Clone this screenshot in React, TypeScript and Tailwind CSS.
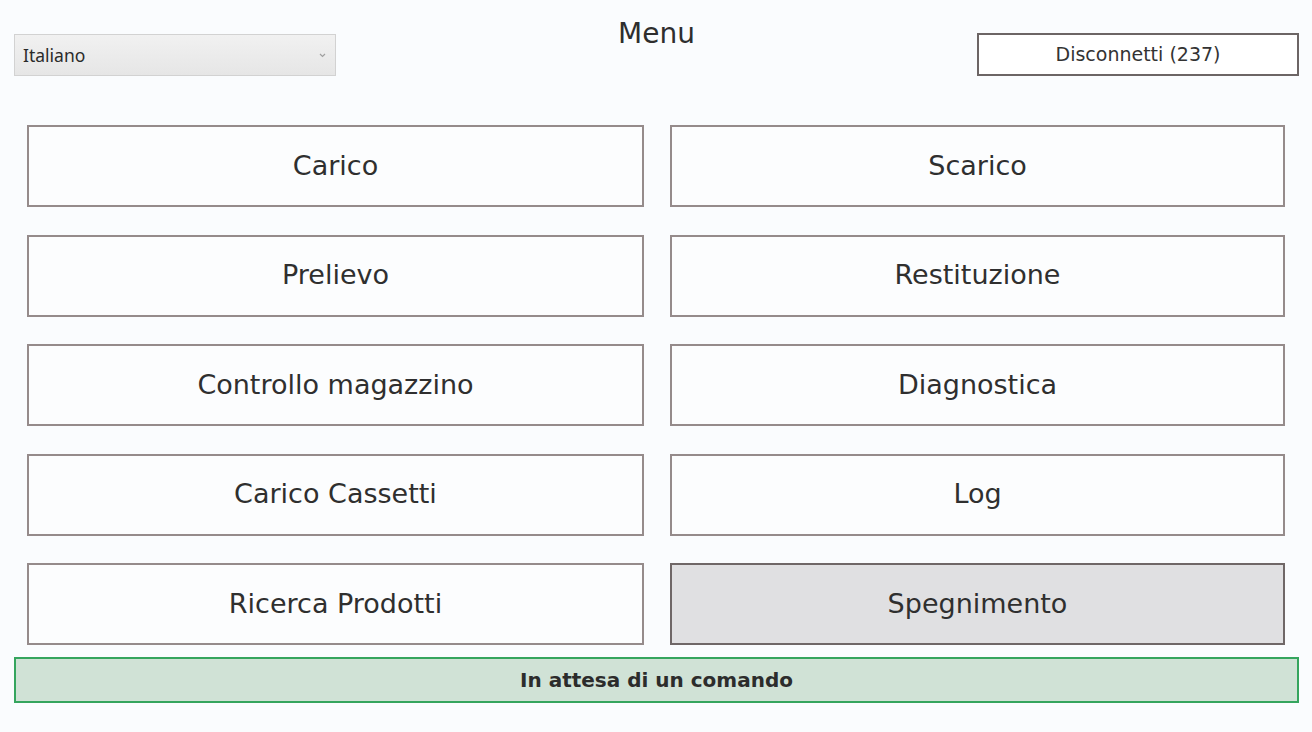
import React from "react";

const buttons: { label: string; active?: boolean }[] = [
  { label: "Carico" },
  { label: "Scarico" },
  { label: "Prelievo" },
  { label: "Restituzione" },
  { label: "Controllo magazzino" },
  { label: "Diagnostica" },
  { label: "Carico Cassetti" },
  { label: "Log" },
  { label: "Ricerca Prodotti" },
  { label: "Spegnimento", active: true },
];

export default function App() {
  return (
    <div
      className="w-[1312px] h-[732px] bg-[#fafcfe] flex flex-col overflow-hidden text-[#2f2f2f]"
      style={{ fontFamily: '"DejaVu Sans", Verdana, sans-serif' }}
    >
      <div className="grid grid-cols-[322px_1fr_322px] items-start pl-[14px] pr-[13px]">
        <div
          className="mt-[34px] h-[42px] flex items-center justify-between pl-[8px] pr-[9px] border border-[#d2d2d2] bg-gradient-to-b from-[#f1f1f1] to-[#e6e6e6] text-[17.5px] text-[#2a2a2a]"
          style={{ fontFamily: '"Noto Sans", "Open Sans", sans-serif' }}
        >
          <span>Italiano</span>
          <svg width="7" height="5" viewBox="0 0 7 5" className="mt-[1px]">
            <path d="M1 1 L3.5 3.5 L6 1" stroke="#a0a0a0" strokeWidth="1.2" fill="none" />
          </svg>
        </div>
        <div className="mt-[18px] text-center text-[28px] leading-[32px] text-[#2e2e2e]">Menu</div>
        <div className="mt-[33px] h-[43px] flex items-center justify-center border-2 border-[#6c6565] bg-white text-[19px] text-[#333]">
          Disconnetti (237)
        </div>
      </div>

      <div className="mt-[49px] grid grid-cols-[617px_615px] gap-x-[26px] gap-y-[27.5px] pl-[27px]">
        {buttons.map((b) => (
          <div
            key={b.label}
            className={
              b.active
                ? "h-[82px] flex items-center justify-center border-2 border-[#6f6767] bg-[#e0e0e2] text-[27px] text-[#2f2f2f]"
                : "h-[82px] flex items-center justify-center border-2 border-[#958b8b] bg-[#fcfdfe] text-[27px] text-[#2f2f2f]"
            }
          >
            {b.label}
          </div>
        ))}
      </div>

      <div className="mt-[12px] ml-[14px] mr-[13px] h-[46px] flex items-center justify-center border-2 border-[#35a55e] bg-[#d0e2d6] text-[20px] font-bold text-[#2c2c2c]">
        In attesa di un comando
      </div>
    </div>
  );
}
